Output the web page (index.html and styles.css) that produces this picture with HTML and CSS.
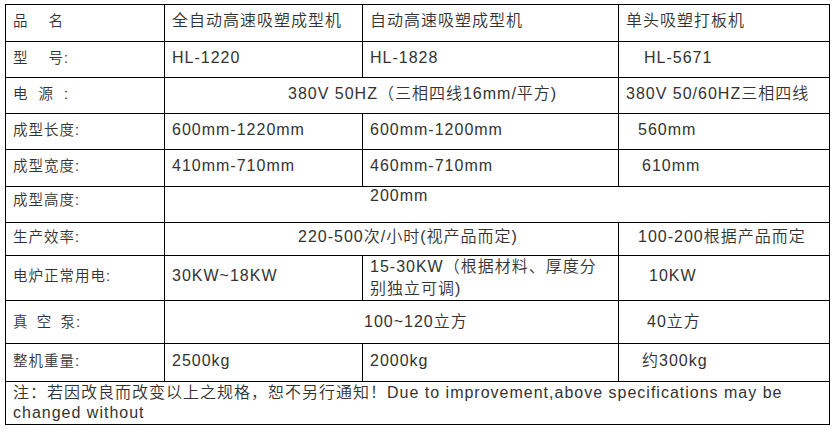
FILE: index.html
```html
<!DOCTYPE html>
<html lang="zh-CN">
<head>
<meta charset="utf-8">
<title>吸塑成型机规格</title>
<link rel="stylesheet" href="styles.css">
</head>
<body>
<table class="spec">
  <colgroup>
    <col class="c1"><col class="c2"><col class="c3"><col class="c4">
  </colgroup>
  <tbody>
    <tr class="r1">
      <td class="lab">品&nbsp;&nbsp;&nbsp;&nbsp;名</td>
      <td>全自动高速吸塑成型机</td>
      <td>自动高速吸塑成型机</td>
      <td>单头吸塑打板机</td>
    </tr>
    <tr class="r2">
      <td class="lab">型&nbsp;&nbsp;&nbsp;&nbsp;号:</td>
      <td>HL-1220</td>
      <td>HL-1828</td>
      <td class="p25">HL-5671</td>
    </tr>
    <tr class="r3">
      <td class="lab">电&nbsp;&nbsp;源&nbsp;&nbsp;:</td>
      <td colspan="2" class="p123">380V 50HZ（三相四线16mm/平方)</td>
      <td>380V 50/60HZ三相四线</td>
    </tr>
    <tr class="r4">
      <td class="lab">成型长度:</td>
      <td>600mm-1220mm</td>
      <td>600mm-1200mm</td>
      <td class="p19">560mm</td>
    </tr>
    <tr class="r5">
      <td class="lab">成型宽度:</td>
      <td>410mm-710mm</td>
      <td>460mm-710mm</td>
      <td class="p23">610mm</td>
    </tr>
    <tr class="r6">
      <td class="lab hi-lab">成型高度:</td>
      <td colspan="3" class="p205 hi-val">200mm</td>
    </tr>
    <tr class="r7">
      <td class="lab">生产效率:</td>
      <td colspan="2" class="p133">220-500次/小时(视产品而定)</td>
      <td class="p19">100-200根据产品而定</td>
    </tr>
    <tr class="r8">
      <td class="lab">电炉正常用电:</td>
      <td>30KW~18KW</td>
      <td class="two">15-30KW（根据材料、厚度分<br>别独立可调)</td>
      <td class="p30">10KW</td>
    </tr>
    <tr class="r9">
      <td class="lab">真&ensp;空&ensp;泵:</td>
      <td colspan="2" class="p199">100~120立方</td>
      <td class="p28">40立方</td>
    </tr>
    <tr class="r10">
      <td class="lab">整机重量:</td>
      <td>2500kg</td>
      <td>2000kg</td>
      <td class="p23">约300kg</td>
    </tr>
    <tr class="r11">
      <td colspan="4" class="note">注：若因改良而改变以上之规格，恕不另行通知！Due to improvement,above specifications may be changed without</td>
    </tr>
  </tbody>
</table>
</body>
</html>
```

FILE: styles.css
```css
html, body {
  margin: 0;
  padding: 0;
  background: #ffffff;
}

body {
  padding: 4px 0 0 5px;
  font-family: "Liberation Sans", "Noto Sans CJK SC", Arial, sans-serif;
  font-size: 16px;
  font-weight: 350;
  letter-spacing: 1px;
  color: #333333;
}

.spec {
  border-collapse: collapse;
  table-layout: fixed;
  width: 824px;
}

.c1 { width: 159px; }
.c2 { width: 198px; }
.c3 { width: 256px; }
.c4 { width: 211px; }

.spec td {
  border: 1px solid #000000;
  padding: 0 4px 4px 7px;
  line-height: 22px;
  vertical-align: middle;
  white-space: nowrap;
}

.spec td.lab {
  font-size: 14.5px;
}

.r1 { height: 37px; }
.r2 { height: 36px; }
.r3 { height: 36px; }
.r4 { height: 36px; }
.r5 { height: 37px; }
.r6 { height: 36px; }
.r7 { height: 33px; }
.r8 { height: 45px; }
.r9 { height: 43px; }
.r10 { height: 38px; }
.r11 { height: 43px; }

.spec td.two { padding-bottom: 0; }
.r9 td { padding-bottom: 0; }

.spec td.hi-lab {
  vertical-align: top;
  line-height: 20px;
  padding-top: 3px;
  padding-bottom: 0;
}

.spec td.hi-val {
  vertical-align: top;
  line-height: 18px;
  padding-top: 0;
  padding-bottom: 0;
}

.spec td.note {
  vertical-align: top;
  white-space: normal;
  line-height: 20px;
  padding: 1px 4px 0 7px;
}

.spec td.p19 { padding-left: 19px; }
.spec td.p23 { padding-left: 23px; }
.spec td.p25 { padding-left: 25px; }
.spec td.p28 { padding-left: 28px; }
.spec td.p30 { padding-left: 30px; }
.spec td.p123 { padding-left: 123px; }
.spec td.p133 { padding-left: 133px; }
.spec td.p199 { padding-left: 199px; }
.spec td.p205 { padding-left: 205px; }
```
